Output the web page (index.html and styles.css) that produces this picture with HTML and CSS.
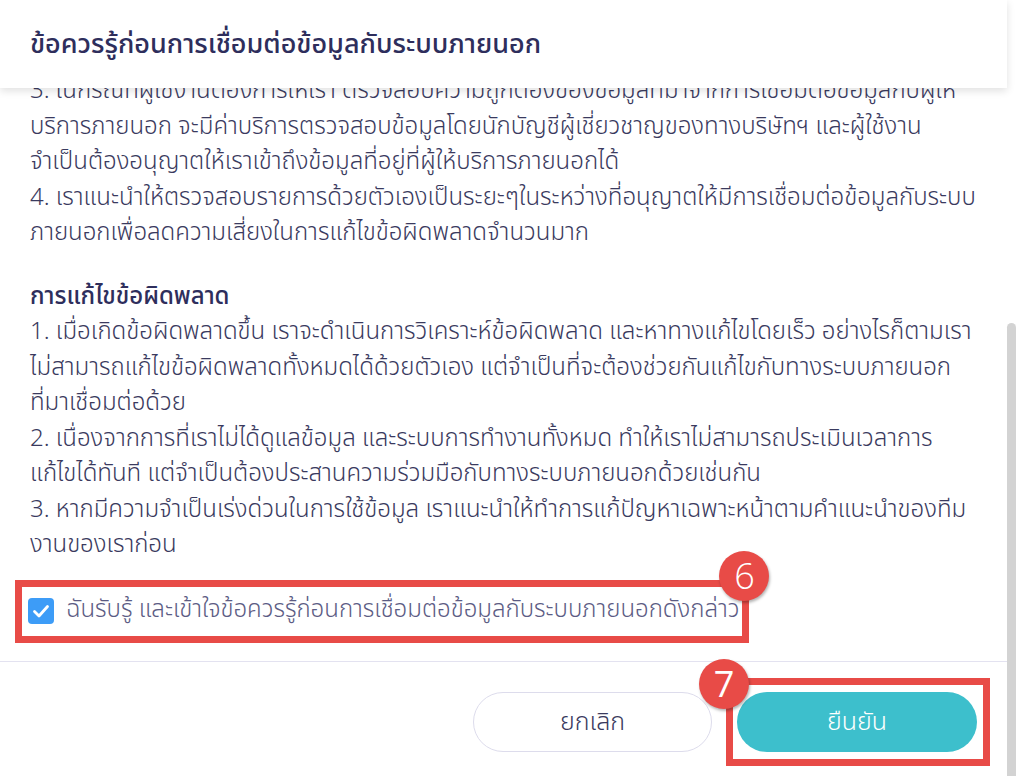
FILE: index.html
```html
<!DOCTYPE html>
<html lang="th">
<head>
    <meta charset="UTF-8">
    <meta name="viewport" content="width=device-width, initial-scale=1.0">
    <title>ข้อควรรู้ก่อนการเชื่อมต่อข้อมูลกับระบบภายนอก</title>
    <link rel="stylesheet" href="styles.css">
</head>
<body>
    <div class="modal">
        <div class="modal-header">
            <h2>ข้อควรรู้ก่อนการเชื่อมต่อข้อมูลกับระบบภายนอก</h2>
        </div>

        <div class="modal-body">
            <div class="content">
                <p>
                    3. ในกรณีที่ผู้ใช้งานต้องการให้เรา ตรวจสอบความถูกต้องของข้อมูลที่มาจากการเชื่อมต่อข้อมูลกับผู้ให้<br>
                    บริการภายนอก จะมีค่าบริการตรวจสอบข้อมูลโดยนักบัญชีผู้เชี่ยวชาญของทางบริษัทฯ และผู้ใช้งาน<br>
                    จำเป็นต้องอนุญาตให้เราเข้าถึงข้อมูลที่อยู่ที่ผู้ให้บริการภายนอกได้<br>
                    4. เราแนะนำให้ตรวจสอบรายการด้วยตัวเองเป็นระยะๆในระหว่างที่อนุญาตให้มีการเชื่อมต่อข้อมูลกับระบบ<br>
                    ภายนอกเพื่อลดความเสี่ยงในการแก้ไขข้อผิดพลาดจำนวนมาก
                </p>

                <h3>การแก้ไขข้อผิดพลาด</h3>
                <p>
                    1. เมื่อเกิดข้อผิดพลาดขึ้น เราจะดำเนินการวิเคราะห์ข้อผิดพลาด และหาทางแก้ไขโดยเร็ว อย่างไรก็ตามเรา<br>
                    ไม่สามารถแก้ไขข้อผิดพลาดทั้งหมดได้ด้วยตัวเอง แต่จำเป็นที่จะต้องช่วยกันแก้ไขกับทางระบบภายนอก<br>
                    ที่มาเชื่อมต่อด้วย<br>
                    2. เนื่องจากการที่เราไม่ได้ดูแลข้อมูล และระบบการทำงานทั้งหมด ทำให้เราไม่สามารถประเมินเวลาการ<br>
                    แก้ไขได้ทันที แต่จำเป็นต้องประสานความร่วมมือกับทางระบบภายนอกด้วยเช่นกัน<br>
                    3. หากมีความจำเป็นเร่งด่วนในการใช้ข้อมูล เราแนะนำให้ทำการแก้ปัญหาเฉพาะหน้าตามคำแนะนำของทีม<br>
                    งานของเราก่อน
                </p>

                <label class="agree">
                    <span class="checkbox">
                        <svg width="26" height="26" viewBox="0 0 26 26">
                            <rect x="0" y="0" width="26" height="26" rx="4" fill="#3d9cf7"/>
                            <path d="M6.5 13.5 L11 18 L19.5 8.5" fill="none" stroke="#fff" stroke-width="2.8" stroke-linecap="round" stroke-linejoin="round"/>
                        </svg>
                    </span>
                    <span>ฉันรับรู้ และเข้าใจข้อควรรู้ก่อนการเชื่อมต่อข้อมูลกับระบบภายนอกดังกล่าว</span>
                    <span class="step step-6">6</span>
                </label>
            </div>
        </div>

        <div class="modal-footer">
            <button class="btn btn-cancel">ยกเลิก</button>
            <div class="confirm-wrap">
                <button class="btn btn-confirm">ยืนยัน</button>
                <span class="mark"></span>
                <span class="step step-7">7</span>
            </div>
        </div>
    </div>

    <div class="scrollbar">
        <div class="thumb"></div>
    </div>
</body>
</html>
```

FILE: styles.css
```css
body {
    margin: 0;
    width: 1016px;
    height: 776px;
    overflow: hidden;
    display: flex;
    background-color: white;
    font-family: "Noto Sans Thai", "Noto Sans Thai Looped", "Noto Sans", sans-serif;
    color: #3a3a5e;
}
.modal {
    flex: 1;
    display: flex;
    flex-direction: column;
    height: 776px;
}
.modal-header {
    height: 88px;
    padding: 0 30px;
    display: flex;
    align-items: center;
    background-color: white;
    box-shadow: 0 3px 8px rgba(0,0,0,0.12);
    position: relative;
    z-index: 1;
}
.modal-header h2 {
    margin: 0;
    font-size: 27px;
    font-weight: 500;
    color: #2e2e5c;
}
.modal-body {
    flex: 1;
    overflow: hidden;
    padding: 0 30px;
}
.content {
    margin-top: -14px;
    font-size: 24px;
    line-height: 35.5px;
    font-weight: 300;
}
.content p {
    margin: 0;
}
.content h3 {
    margin: 28px 0 0 0;
    font-size: 24px;
    font-weight: 500;
    line-height: 35.5px;
    color: #2e2e5c;
}
.agree {
    position: relative;
    display: inline-flex;
    align-items: center;
    gap: 12px;
    margin: 16px 0 0 -15px;
    padding: 0 3px 0 6px;
    height: 49px;
    border: 7px solid #e84b47;
    color: #5c5c84;
}
.checkbox {
    display: flex;
}
.step {
    position: absolute;
    width: 50px;
    height: 50px;
    border-radius: 50%;
    background-color: #e84b47;
    color: white;
    font-family: "Open Sans", sans-serif;
    font-size: 36px;
    line-height: 50px;
    text-align: center;
    box-shadow: 1px 2px 3px rgba(0,0,0,0.3);
    z-index: 2;
}
.step-6 {
    top: -36px;
    right: -27px;
}
.modal-footer {
    height: 115px;
    border-top: 1px solid #e3e2f0;
    padding: 30px 30px 0 0;
    display: flex;
    justify-content: flex-end;
    align-items: flex-start;
    gap: 25px;
    box-sizing: border-box;
}
.btn {
    width: 239px;
    height: 60px;
    border-radius: 30px;
    font-family: inherit;
    font-size: 25px;
    font-weight: 300;
    cursor: pointer;
}
.btn-cancel {
    background-color: white;
    border: 1px solid #dddcec;
    color: #3a3a5e;
}
.confirm-wrap {
    position: relative;
    display: flex;
}
.btn-confirm {
    width: 240px;
    background-color: #3dbfcc;
    border: none;
    color: white;
}
.mark {
    position: absolute;
    top: -14px;
    bottom: -14px;
    left: -11px;
    right: -13px;
    border: 7px solid #e84b47;
}
.step-7 {
    top: -33px;
    left: -38px;
}
.scrollbar {
    width: 9px;
    padding-top: 323px;
    display: flex;
    flex-direction: column;
}
.thumb {
    flex: 1;
    background-color: #d3d3d3;
    border-radius: 5px 5px 0 0;
}
```
